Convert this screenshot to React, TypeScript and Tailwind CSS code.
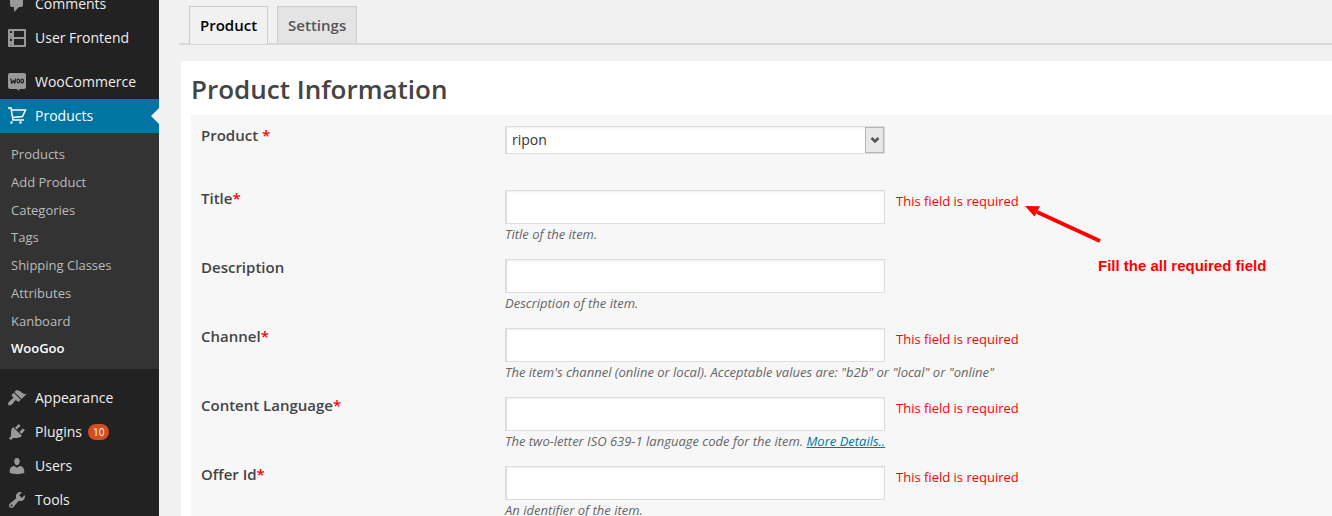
import React from "react";

const dash = {
  comments:
    "M5 2h9c1.1 0 2 .9 2 2v7c0 1.1-.9 2-2 2h-2l-5 5v-5H5c-1.1 0-2-.9-2-2V4c0-1.1.9-2 2-2z",
  appearance:
    "M14.48 11.06L7.41 3.99l1.5-1.5c.5-.56 2.3-.47 3.51.32 1.21.8 1.43 1.28 2.91 2.1 1.18.64 2.45 1.26 4.45.85zm-.71.71L6.7 4.7 4.93 6.47c-.39.39-.39 1.02 0 1.41l1.06 1.06c.39.39.39 1.03 0 1.42-.6.6-1.43 1.11-2.21 1.69-.35.26-.7.53-1.01.84C1.43 14.23.4 16.08 1.4 17.07c.99 1 2.84-.03 4.18-1.36.31-.31.58-.66.85-1.02.57-.78 1.08-1.61 1.69-2.21.39-.39 1.02-.39 1.41 0l1.06 1.06c.39.39 1.02.39 1.41 0z",
  plugins:
    "M13.11 4.36L9.87 7.6 8 5.73l3.24-3.24c.35-.34 1.05-.2 1.56.32.52.51.66 1.21.31 1.55zm-8 1.77l.91-1.12 9.01 9.01-1.19.84c-.71.71-2.63 1.16-3.82 1.16H6.14L4.9 17.26c-.59.59-1.54.59-2.12 0-.59-.58-.59-1.53 0-2.12l1.24-1.24v-3.88c0-1.13.4-3.19 1.09-3.89zm7.26 3.97l3.24-3.24c.34-.35 1.04-.21 1.55.31.52.51.66 1.21.31 1.55l-3.24 3.25z",
  users:
    "M10 9.25c-2.27 0-2.73-3.44-2.73-3.44C7 4.02 7.82 2 9.97 2c2.16 0 2.98 2.02 2.71 3.81 0 0-.41 3.44-2.68 3.44zm0 2.57L12.72 10c2.39 0 4.52 2.33 4.52 4.53v2.49s-3.65 1.13-7.24 1.13c-3.65 0-7.24-1.13-7.24-1.13v-2.49c0-2.25 1.94-4.48 4.47-4.48z",
  tools:
    "M16.68 9.77c-1.34 1.34-3.3 1.67-4.95.99l-5.41 6.52c-.99.99-2.59.99-3.58 0s-.99-2.59 0-3.57l6.52-5.42c-.68-1.65-.35-3.61.99-4.95 1.28-1.28 3.12-1.62 4.72-1.06l-2.89 2.89 2.82 2.82 2.86-2.87c.53 1.58.18 3.39-1.08 4.65zM3.81 16.21c.4.39 1.04.39 1.43 0 .4-.4.4-1.04 0-1.43-.39-.4-1.03-.4-1.43 0-.39.39-.39 1.03 0 1.43z",
};

function Dashicon({ d }: { d: string }) {
  return (
    <svg viewBox="0 0 20 20" className="size-5 shrink-0 fill-[#999]" aria-hidden="true">
      <path d={d} />
    </svg>
  );
}

function FrontendIcon() {
  return (
    <svg viewBox="0 0 20 20" className="size-5 shrink-0" aria-hidden="true">
      <rect x="1" y="1" width="18" height="18" rx="1" fill="#999" />
      <path d="M7 3h10v6H7zM7 11h10v6H7zM3 3h2v2H3zM3 11h2v2H3z" fill="#222" />
      <path d="M3 9h2v1H3zM3 17h2v-1H3z" fill="#777" />
    </svg>
  );
}

function WooIcon() {
  return (
    <svg viewBox="0 0 20 20" className="size-5 shrink-0" aria-hidden="true">
      <path
        d="M3 1h14a2 2 0 0 1 2 2v12a2 2 0 0 1-2 2h-5l.5 2-3-2H3a2 2 0 0 1-2-2V3a2 2 0 0 1 2-2z"
        fill="#999"
      />
      <g fill="none" stroke="#222" strokeWidth="1.2" strokeLinejoin="round">
        <path d="M3.800 6.500l.9 5 1.800-3.200 1.300 3.200 1-5" />
        <ellipse cx="11.400" cy="9" rx="1.300" ry="1.900" />
        <ellipse cx="15.200" cy="9" rx="1.300" ry="1.900" />
      </g>
    </svg>
  );
}

function CartIcon() {
  return (
    <svg viewBox="0 0 20 20" className="size-5 shrink-0" aria-hidden="true">
      <path
        d="M1 2h3L6 14h11M4.300 4H18.500L15.500 10.500 5.500 11.500"
        fill="none"
        stroke="#fff"
        strokeWidth="1.500"
      />
      <circle cx="4.500" cy="16.500" r="1.200" fill="#fff" />
      <circle cx="13.500" cy="16.500" r="1.200" fill="#fff" />
    </svg>
  );
}

function MenuItem({ icon, children }: { icon: React.ReactNode; children: React.ReactNode }) {
  return (
    <a href="#" className="flex h-[34px] items-center gap-2 pl-[7px] text-sm text-[#eee]">
      {icon}
      {children}
    </a>
  );
}

const submenu = [
  "Products",
  "Add Product",
  "Categories",
  "Tags",
  "Shipping Classes",
  "Attributes",
  "Kanboard",
];

function Sidebar() {
  return (
    <nav className="-mt-[13px] w-[159px] shrink-0 self-start bg-[#222]">
      <MenuItem icon={<Dashicon d={dash.comments} />}>Comments</MenuItem>
      <MenuItem icon={<FrontendIcon />}>User Frontend</MenuItem>
      <div className="pt-[10px]">
        <MenuItem icon={<WooIcon />}>WooCommerce</MenuItem>
      </div>
      <div className="relative bg-[#0074a2]">
        <MenuItem icon={<CartIcon />}>
          <span className="text-white">Products</span>
        </MenuItem>
        <svg viewBox="0 0 8 16" className="absolute top-[9px] right-0 h-4 w-2" aria-hidden="true">
          <path d="M8 0v16L0 8z" fill="#f1f1f1" />
        </svg>
      </div>
      <ul className="flex h-[236px] flex-col bg-[#333] px-[11px] pt-2 pb-1.5 text-[13px] text-[#bbb]">
        {submenu.map((name) => (
          <li key={name} className="flex flex-1 items-center">
            <a href="#">{name}</a>
          </li>
        ))}
        <li className="flex flex-1 items-center font-semibold text-white">
          <a href="#" aria-current="page">WooGoo</a>
        </li>
      </ul>
      <div className="pt-3">
        <MenuItem icon={<Dashicon d={dash.appearance} />}>Appearance</MenuItem>
        <MenuItem icon={<Dashicon d={dash.plugins} />}>
          <span className="flex items-center gap-1.5">
            Plugins
            <span className="rounded-full bg-[#d54e21] px-[5px] text-[10px] leading-4 text-white">10</span>
          </span>
        </MenuItem>
        <MenuItem icon={<Dashicon d={dash.users} />}>Users</MenuItem>
        <MenuItem icon={<Dashicon d={dash.tools} />}>Tools</MenuItem>
      </div>
    </nav>
  );
}

type Field = { id: string; label: string; required?: boolean; help: string; more?: boolean };

const fields: Field[] = [
  { id: "title", label: "Title", required: true, help: "Title of the item." },
  { id: "description", label: "Description", help: "Description of the item." },
  {
    id: "channel",
    label: "Channel",
    required: true,
    help: 'The item\'s channel (online or local). Acceptable values are: "b2b" or "local" or "online"',
  },
  {
    id: "language",
    label: "Content Language",
    required: true,
    help: "The two-letter ISO 639-1 language code for the item.",
    more: true,
  },
  { id: "offer", label: "Offer Id", required: true, help: "An identifier of the item." },
];

function FieldRow({ field }: { field: Field }) {
  return (
    <div className="flex h-[69px]">
      <label htmlFor={field.id} className="w-[304px] shrink-0 text-[15px] leading-4 font-semibold text-[#444]">
        {field.label}
        {field.required && <span className="text-[#f00]">*</span>}
      </label>
      <div className="min-w-0 flex-1">
        <div className="flex items-start gap-[11px]">
          <input
            id={field.id}
            type="text"
            className="h-[34px] w-[380px] border border-l-2 border-[#ddd] bg-white px-1.5 text-sm shadow-[inset_0_1px_2px_rgba(0,0,0,0.07)] outline-none"
          />
          {field.required && <span className="text-[13px] leading-[22px] text-[#f00]">This field is required</span>}
        </div>
        <p className="text-[13px] leading-5 whitespace-nowrap text-[#666] italic">
          {field.help}
          {field.more && (
            <>
              {" "}
              <a href="#" className="text-[#0074a2] underline">
                More Details..
              </a>
            </>
          )}
        </p>
      </div>
    </div>
  );
}

export default function App() {
  return (
    <div className="flex h-screen overflow-hidden bg-[#f1f1f1] font-['Open_Sans',sans-serif] text-[#444]">
      <Sidebar />
      <main className="min-w-0 flex-1 pt-1.5 pl-5">
        <div className="flex gap-[9px] border-b-2 border-[#d9d9d9] pl-[10px] text-[15px] leading-9 font-semibold">
          <a href="#" className="-mb-0.5 h-[38px] border border-b-0 border-[#ccc] bg-[#f1f1f1] px-[10px] text-black">
            Product
          </a>
          <a href="#" className="h-[37px] border border-b-0 border-[#ccc] bg-[#e4e4e4] px-[10px] text-[#555]">
            Settings
          </a>
        </div>
        <section className="mt-4 ml-0.5 bg-white pl-[10px]">
          <h1 className="pt-0.5 text-[26px] leading-[52px] font-semibold text-[#444]">Product Information</h1>
          <form className="relative bg-[#f7f7f7] pt-[11px] pl-[10px]">
            <div className="flex h-16">
              <label htmlFor="product" className="w-[304px] shrink-0 text-[15px] leading-[18px] font-semibold">
                Product <span className="text-[#f00]">*</span>
              </label>
              <div className="relative h-7 w-[380px]">
                <select
                  id="product"
                  className="h-7 w-full appearance-none border border-l-2 border-[#ddd] bg-white px-[5px] text-sm text-[#333] shadow-[inset_0_1px_2px_rgba(0,0,0,0.07)] outline-none"
                >
                  <option>ripon</option>
                </select>
                <span className="pointer-events-none absolute top-px right-px flex h-[26px] w-[19px] items-center justify-center border border-[#b4b4b4] bg-[#e8e8e8]">
                  <svg viewBox="0 0 10 8" className="h-2 w-2.5" aria-hidden="true">
                    <path d="M1.500 2L5 5.500 8.500 2" fill="none" stroke="#555" strokeWidth="2.500" />
                  </svg>
                </span>
              </div>
            </div>
            {fields.map((f) => (
              <FieldRow key={f.id} field={f} />
            ))}
            <svg
              viewBox="0 0 80 40"
              className="pointer-events-none absolute top-[89px] left-[832px] h-10 w-20"
              aria-hidden="true"
            >
              <path d="M14 8L77 37" stroke="#f00" strokeWidth="4" />
              <path d="M2 2l15 .3L11.500 12.500z" fill="#f00" />
            </svg>
            <p className="absolute top-[141px] left-[907px] font-['Liberation_Sans',sans-serif] text-[15px] leading-5 font-bold whitespace-nowrap text-[#f00]">
              Fill the all required field
            </p>
          </form>
        </section>
      </main>
    </div>
  );
}
